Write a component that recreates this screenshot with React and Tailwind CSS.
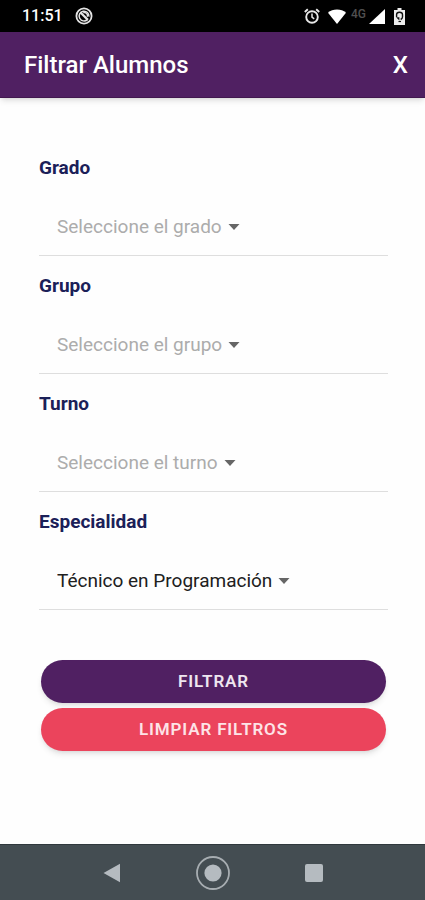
import { useState } from "react";

const fields = [
  { id: "grado", label: "Grado", placeholder: "Seleccione el grado", options: ["1", "2", "3"], value: "" },
  { id: "grupo", label: "Grupo", placeholder: "Seleccione el grupo", options: ["A", "B", "C"], value: "" },
  { id: "turno", label: "Turno", placeholder: "Seleccione el turno", options: ["Matutino", "Vespertino"], value: "" },
  {
    id: "especialidad",
    label: "Especialidad",
    placeholder: "Seleccione la especialidad",
    options: ["Técnico en Programación"],
    value: "Técnico en Programación",
  },
];

const initialValues = Object.fromEntries(fields.map((f) => [f.id, f.value]));
const emptyValues = Object.fromEntries(fields.map((f) => [f.id, ""]));

function StatusBar() {
  return (
    <div className="flex h-8 items-center justify-between bg-black pr-5 pl-[22px] text-white">
      <div className="flex items-center gap-3">
        <span className="text-base font-medium">11:51</span>
        <svg className="size-[18px]" viewBox="0 0 18 18" fill="none" stroke="#e4e4e4" aria-hidden="true">
          <circle cx="9" cy="9" r="7.6" strokeWidth="1.8" />
          <path d="M12.4 12.6A4.9 4.9 0 1 1 13.9 9.6" strokeWidth="1.5" />
          <path d="M5.5 5.5l7.4 7.4" strokeWidth="2.2" />
          <path d="M8.2 5.6h2.2l2 2v2.2" strokeWidth="1.4" />
        </svg>
      </div>
      <div className="flex items-center">
        <svg className="mr-2 size-4" viewBox="0 0 16 16" fill="none" stroke="#e8e8e8" aria-hidden="true">
          <circle cx="8" cy="9" r="5.8" strokeWidth="1.9" />
          <path d="M8 5.6v3.6l2.200 1.700" strokeWidth="1.5" />
          <path d="M.8 4l3-2.800M15.200 4l-3-2.800" strokeWidth="1.9" />
        </svg>
        <svg className="h-[15px] w-[18px]" viewBox="0 0 18 15" fill="#fff" aria-hidden="true">
          <path d="M9 15L0 3.8C2.4 1.6 5.5.5 9 .5s6.6 1.1 9 3.3z" />
        </svg>
        <span className="ml-[5px] w-[18px] pb-1 text-xs font-medium text-[#505050]">4G</span>
        <svg className="h-[15px] w-4" viewBox="0 0 16 15" fill="#fff" aria-hidden="true">
          <path d="M16 0v15H0z" />
        </svg>
        <svg className="ml-[9px] h-[17px] w-[11px]" viewBox="0 0 11 17" aria-hidden="true">
          <path d="M3.5 0h4v2H11v15H0V2h3.5z" fill="#ececec" />
          <path d="M2.6 9V6.6C2.6 5 3.800 4.200 5.500 4.200S8.500 5 8.500 6.600V9c0 1.300-.8 2-1.800 2.500" fill="none" stroke="#111" strokeWidth="1.4" />
          <path d="M2 9.200h3.400v3.400z" fill="#111" />
          <path d="M4.500 13.500h2.500" stroke="#111" strokeWidth="1.200" />
        </svg>
      </div>
    </div>
  );
}

function Field({ field, value, onChange }) {
  return (
    <div className="border-b border-[#dedede] pt-[18px] pb-[5px]">
      <label htmlFor={field.id} className="block text-[19px] leading-6 font-bold text-[#1b2058]">
        {field.label}
      </label>
      <div className="mt-6 flex h-[46px] items-center pl-[18px]">
        <select
          id={field.id}
          value={value}
          onChange={(e) => onChange(e.target.value)}
          className={`field-sizing-content h-full cursor-pointer appearance-none bg-transparent pr-[18px] text-[19px] outline-none ${
            value ? "text-[#202020]" : "text-[#acacac]"
          }`}
        >
          <option value="" disabled hidden>
            {field.placeholder}
          </option>
          {field.options.map((o) => (
            <option key={o} value={o}>
              {o}
            </option>
          ))}
        </select>
        <svg className="pointer-events-none -ml-3 h-[6px] w-3" viewBox="0 0 12 6" fill="#666" aria-hidden="true">
          <path d="M0.5 0h11L6 6z" />
        </svg>
      </div>
    </div>
  );
}

function NavBar() {
  return (
    <nav aria-label="Sistema" className="flex h-14 items-center justify-center gap-[65px] border-t border-[#30383d] bg-[#444d52]">
      <button type="button" aria-label="Atrás" className="flex size-9 items-center justify-center">
        <svg className="h-5 w-[18px]" viewBox="0 0 18 20" fill="#b5bbc0" aria-hidden="true">
          <path d="M17 .8v18.4L.5 10z" />
        </svg>
      </button>
      <button type="button" aria-label="Inicio" className="flex size-9 items-center justify-center">
        <svg className="size-9" viewBox="0 0 36 36" aria-hidden="true">
          <circle cx="18" cy="18" r="16" fill="none" stroke="#a7adb1" strokeWidth="1.8" />
          <circle cx="18" cy="18" r="8.6" fill="#b5bbc0" />
        </svg>
      </button>
      <button type="button" aria-label="Recientes" className="flex size-9 items-center justify-center">
        <span className="size-[18px] rounded-xs bg-[#b5bbc0]" />
      </button>
    </nav>
  );
}

export default function App() {
  const [values, setValues] = useState(initialValues);

  return (
    <div className="flex min-h-screen flex-col bg-[#fefefe] font-['Roboto',sans-serif]">
      <StatusBar />
      <header className="flex h-[66px] items-center justify-between border-b border-[#42184f] bg-[#502062] pr-[17px] pl-6 text-white shadow-md">
        <h1 className="text-2xl font-medium">Filtrar Alumnos</h1>
        <button type="button" aria-label="Cerrar" className="text-2xl font-medium">
          X
        </button>
      </header>
      <main className="flex-1 pt-10 pr-[37px] pl-[39px]">
        <form onSubmit={(e) => e.preventDefault()}>
          {fields.map((f) => (
            <Field
              key={f.id}
              field={f}
              value={values[f.id]}
              onChange={(v) => setValues({ ...values, [f.id]: v })}
            />
          ))}
          <div className="mt-[50px] flex flex-col gap-[5px] px-[2px] pb-8">
            <button
              type="submit"
              className="h-[43px] rounded-full bg-[#502062] text-[17px] font-semibold tracking-wider text-[#eee6f0] shadow-md"
            >
              FILTRAR
            </button>
            <button
              type="button"
              onClick={() => setValues(emptyValues)}
              className="h-[43px] rounded-full bg-[#eb445c] text-[17px] font-semibold tracking-wider text-[#fde3e7] shadow-md"
            >
              LIMPIAR FILTROS
            </button>
          </div>
        </form>
      </main>
      <NavBar />
    </div>
  );
}
